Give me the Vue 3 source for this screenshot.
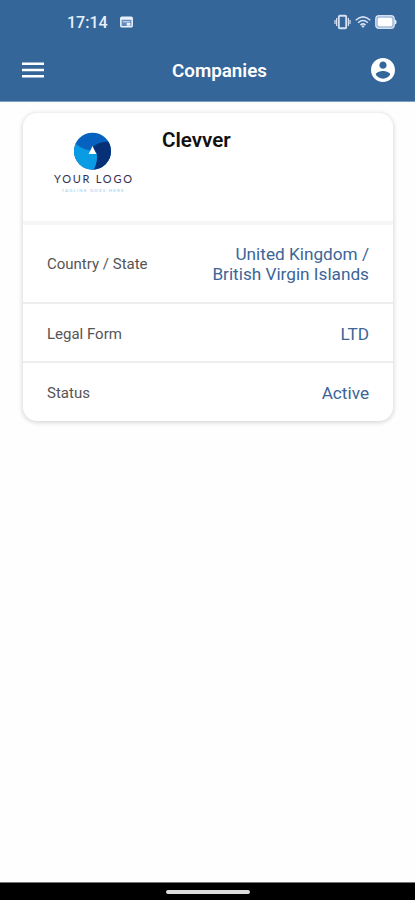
<template>
  <div class="screen">
    <header class="header">
      <div class="statusbar">
        <span class="time">17:14</span>
        <svg class="calendar" viewBox="0 0 14 12" aria-hidden="true">
          <rect x="0.9" y="0.8" width="12.2" height="10.4" rx="1.2" fill="#6189bb" stroke="#e8f0fb" stroke-width="1.7" />
          <path d="M1 1.2h12v2.4H1z" fill="#e8f0fb" />
          <path d="M3 5.8h8" stroke="#e8f0fb" stroke-width="1" />
          <path d="M7.2 7h4v3h-4z" fill="#e8f0fb" />
        </svg>
        <div class="system">
          <svg class="vibrate" viewBox="0 0 17 16" aria-hidden="true">
            <rect x="4.8" y="1.8" width="7.4" height="12.4" rx="1" fill="none" stroke="#d5e1f3" stroke-width="1.9" />
            <path d="M2.6 4v8M14.4 4v8M1 6v4M16 6v4" stroke="#d5e1f3" stroke-width="1.2" />
          </svg>
          <svg class="wifi" viewBox="0 0 16 12" aria-hidden="true">
            <g fill="none" stroke="#d5e1f3" stroke-width="1.5">
              <path d="M0.7 4.2Q8-2.4 15.3 4.2" />
              <path d="M3.1 6.7Q8 2.2 12.9 6.7" />
              <path d="M5.4 9Q8 6.8 10.6 9" />
            </g>
            <path d="M6 9.5h4L8 11.9z" fill="#d5e1f3" />
          </svg>
          <svg class="battery" viewBox="0 0 22 14" aria-hidden="true">
            <rect x="0.7" y="0.7" width="18.6" height="12.6" rx="3.4" fill="#a5bbdc" stroke="#d5e1f3" stroke-width="1.2" />
            <rect x="2.8" y="2.8" width="14.4" height="8.4" rx="1.6" fill="#fff" />
            <path d="M20 4.4q1.6.6 1.6 2.6T20 9.6z" fill="#e8f0fb" />
          </svg>
        </div>
      </div>
      <nav class="toolbar">
        <button class="icon-btn" type="button" aria-label="Menu">
          <svg width="22" height="16" viewBox="0 0 22 16">
            <path d="M0 1.8h22M0 8h22M0 14.2h22" stroke="#fff" stroke-width="2.4" />
          </svg>
        </button>
        <h1 class="title">Companies</h1>
        <button class="icon-btn" type="button" aria-label="Account">
          <svg width="24" height="24" viewBox="2 2 20 20">
            <path
              fill="#fff"
              d="M12 2C6.48 2 2 6.48 2 12s4.48 10 10 10 10-4.48 10-10S17.52 2 12 2zm0 3c1.66 0 3 1.34 3 3s-1.34 3-3 3-3-1.34-3-3 1.34-3 3-3zm0 14.2c-2.5 0-4.71-1.28-6-3.22.03-1.99 4-3.08 6-3.08 1.99 0 5.97 1.09 6 3.08-1.29 1.94-3.5 3.22-6 3.22z"
            />
          </svg>
        </button>
      </nav>
    </header>

    <main class="content">
      <section class="card">
        <div class="card-head">
          <svg class="logo" viewBox="0 0 80 64" aria-label="Company logo">
            <defs>
              <clipPath id="disc"><circle cx="39.5" cy="20.2" r="18.5" /></clipPath>
            </defs>
            <g clip-path="url(#disc)">
              <rect x="20" y="0" width="40" height="40" fill="#0762bf" />
              <path d="M39 17Q45 9.5 59 10.5V40H40Q45 30 43.5 22z" fill="#063176" />
              <path d="M20 9Q25 17 37 19.5L43.5 22Q45.5 30 40 40H20z" fill="#0a9be5" />
            </g>
            <path d="M39.5 15L43.4 23H35.7z" fill="#fff" />
            <text class="logo-name" x="1" y="51.5" textLength="78">YOUR LOGO</text>
            <text class="logo-tag" x="8.5" y="61" textLength="62">TAGLINE GOES HERE</text>
          </svg>
          <h2 class="name">{{ company.name }}</h2>
        </div>
        <div v-for="row in company.rows" :key="row.label" class="row">
          <span class="label">{{ row.label }}</span>
          <span class="value">
            <span v-for="line in row.lines" :key="line" class="value-line">{{ line }}</span>
          </span>
        </div>
      </section>
    </main>

    <footer class="navbar"><span class="handle" /></footer>
  </div>
</template>

<script setup>
const company = {
  name: "Clevver",
  rows: [
    { label: "Country / State", lines: ["United Kingdom /", "British Virgin Islands"] },
    { label: "Legal Form", lines: ["LTD"] },
    { label: "Status", lines: ["Active"] },
  ],
};
</script>

<style>
body {
  margin: 0;
}
</style>

<style scoped>
.screen {
  display: flex;
  flex-direction: column;
  height: 900px;
  overflow: hidden;
  background: #fefefe;
  font-family: Roboto, "Liberation Sans", sans-serif;
}

.header {
  box-sizing: border-box;
  flex: none;
  height: 102px;
  background: #346699;
  border-bottom: 1px solid #7f9dbf;
}

.statusbar {
  display: flex;
  align-items: center;
  height: 44px;
  padding: 0 18px 0 67px;
}

.time {
  width: 53px;
  color: #e8f0fb;
  font-size: 16px;
  font-weight: 500;
}

.calendar {
  width: 13px;
  height: 12px;
}

.system {
  display: flex;
  align-items: center;
  gap: 4px;
  margin-left: auto;
}

.vibrate {
  width: 17px;
  height: 16px;
}

.wifi {
  width: 16px;
  height: 12px;
}

.battery {
  width: 22px;
  height: 14px;
}

.toolbar {
  display: grid;
  grid-template-columns: 34px 1fr 24px;
  align-items: center;
  height: 52px;
  padding: 0 20px 0 22px;
}

.icon-btn {
  display: flex;
  padding: 0;
  border: none;
  background: transparent;
  cursor: pointer;
}

.title {
  margin: 2px 0 0 12px;
  color: #fff;
  font-size: 18.8px;
  font-weight: 600;
  line-height: 24px;
  text-align: center;
}

.content {
  flex: 1;
  padding: 11px 22px 0 23px;
}

.card {
  overflow: hidden;
  border-radius: 14px;
  background: #fff;
  box-shadow: 0 1px 4px 1px rgba(0, 0, 0, 0.15);
}

.card-head {
  box-sizing: border-box;
  display: flex;
  gap: 29px;
  height: 112px;
  padding: 18px 30px 0;
  border-bottom: 4px solid #f6f6f6;
}

.logo {
  width: 80px;
  height: 64px;
}

.logo-name {
  fill: #343053;
  font-family: Lato, sans-serif;
  font-size: 11px;
}

.logo-tag {
  fill: #9ccbe9;
  font-family: Lato, sans-serif;
  font-size: 4.5px;
}

.name {
  margin: -3px 0 0;
  color: #111;
  font-size: 20.6px;
  font-weight: 600;
  line-height: 24px;
}

.row {
  box-sizing: border-box;
  display: flex;
  align-items: center;
  justify-content: space-between;
  height: 59px;
  padding: 2px 24px 0;
  border-bottom: 2px solid #eee;
}

.row:nth-child(2) {
  height: 79px;
  padding-top: 1px;
}

.row:last-child {
  height: 58px;
  border-bottom: none;
}

.label {
  color: #555;
  font-size: 15px;
}

.value {
  color: #3c6598;
  font-size: 17.2px;
  line-height: 20px;
  text-align: right;
}

.value-line {
  display: block;
}

.navbar {
  box-sizing: border-box;
  display: flex;
  flex: none;
  justify-content: center;
  height: 18px;
  padding-top: 7px;
  border-top: 1px solid #777;
  background: #000;
}

.handle {
  width: 84px;
  height: 4px;
  border-radius: 2px;
  background: #ddd;
}
</style>
